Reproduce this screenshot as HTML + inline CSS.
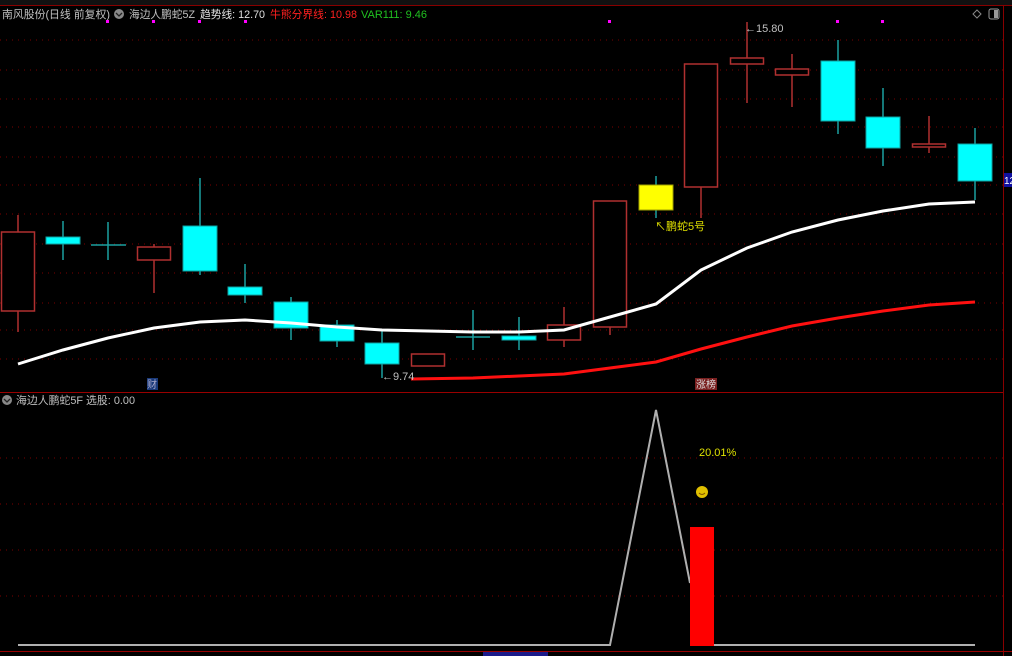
<!DOCTYPE html>
<html><head><meta charset="utf-8"><style>
html,body{margin:0;padding:0;background:#000;width:1012px;height:656px;overflow:hidden}
svg text{font-family:"Liberation Sans","Noto Sans CJK SC",sans-serif}
</style></head><body>
<svg width="1012" height="656" viewBox="0 0 1012 656" xmlns="http://www.w3.org/2000/svg">
<rect width="1012" height="656" fill="#000"/>
<rect x="0" y="0" width="1012" height="5" fill="#111"/>
<line x1="0" y1="5.5" x2="1012" y2="5.5" stroke="#800" stroke-width="1"/>
<g stroke="#7a0000" stroke-width="1" stroke-dasharray="1,5">
<line x1="0" y1="40" x2="1003" y2="40"/><line x1="0" y1="70" x2="1003" y2="70"/><line x1="0" y1="99" x2="1003" y2="99"/><line x1="0" y1="127" x2="1003" y2="127"/><line x1="0" y1="157" x2="1003" y2="157"/><line x1="0" y1="185" x2="1003" y2="185"/><line x1="0" y1="214" x2="1003" y2="214"/><line x1="0" y1="244" x2="1003" y2="244"/><line x1="0" y1="273" x2="1003" y2="273"/><line x1="0" y1="303" x2="1003" y2="303"/><line x1="0" y1="330" x2="1003" y2="330"/><line x1="0" y1="359" x2="1003" y2="359"/>
<line x1="0" y1="458" x2="1003" y2="458"/><line x1="0" y1="504" x2="1003" y2="504"/><line x1="0" y1="550" x2="1003" y2="550"/><line x1="0" y1="596" x2="1003" y2="596"/>
</g>
<line x1="1003.5" y1="5" x2="1003.5" y2="656" stroke="#800"/>
<line x1="0" y1="392.5" x2="1003" y2="392.5" stroke="#900"/>
<line x1="0" y1="651.5" x2="1012" y2="651.5" stroke="#900"/>
<g stroke-width="1.5">
<g stroke="#b03030">
<line x1="18" y1="215" x2="18" y2="332"/><line x1="154" y1="244" x2="154" y2="293"/><line x1="428" y1="354" x2="428" y2="366"/><line x1="564" y1="307" x2="564" y2="347"/><line x1="610" y1="201" x2="610" y2="335"/><line x1="701" y1="64" x2="701" y2="218"/><line x1="747" y1="22" x2="747" y2="103"/><line x1="792" y1="54" x2="792" y2="107"/><line x1="929" y1="116" x2="929" y2="153"/>
</g>
<g stroke="#1aa0a0">
<line x1="63" y1="221" x2="63" y2="260"/><line x1="108" y1="222" x2="108" y2="260"/><line x1="91" y1="245" x2="126" y2="245"/><line x1="200" y1="178" x2="200" y2="275"/><line x1="245" y1="264" x2="245" y2="303"/><line x1="291" y1="297" x2="291" y2="340"/><line x1="337" y1="320" x2="337" y2="347"/><line x1="382" y1="330" x2="382" y2="378"/><line x1="473" y1="310" x2="473" y2="350"/><line x1="456" y1="337" x2="490" y2="337"/><line x1="519" y1="317" x2="519" y2="350"/><line x1="656" y1="176" x2="656" y2="218"/><line x1="838" y1="40" x2="838" y2="134"/><line x1="883" y1="88" x2="883" y2="166"/><line x1="975" y1="128" x2="975" y2="200"/>
</g></g>
<g fill="#000" stroke="#b03030" stroke-width="1.5">
<rect x="1.5" y="232" width="33" height="79"/><rect x="137.5" y="247" width="33" height="13"/><rect x="411.5" y="354" width="33" height="12"/><rect x="547.5" y="325" width="33" height="15"/><rect x="593.5" y="201" width="33" height="126"/><rect x="684.5" y="64" width="33" height="123"/><rect x="730.5" y="58" width="33" height="6"/><rect x="775.5" y="69" width="33" height="6"/><rect x="912.5" y="144" width="33" height="3"/>
</g>
<g fill="#00ffff" stroke="#10a0a0" stroke-width="1">
<rect x="46" y="237" width="34" height="7"/><rect x="183" y="226" width="34" height="45"/><rect x="228" y="287" width="34" height="8"/><rect x="274" y="302" width="34" height="26"/><rect x="320" y="325" width="34" height="16"/><rect x="365" y="343" width="34" height="21"/><rect x="502" y="336" width="34" height="4"/><rect x="821" y="61" width="34" height="60"/><rect x="866" y="117" width="34" height="31"/><rect x="958" y="144" width="34" height="37"/>
</g>
<rect x="639" y="185" width="34" height="25" fill="#ffff00" stroke="#a0a000"/>
<polyline fill="none" stroke="#fff" stroke-width="3" points="18,364 63,350 108,338 154,328 200,322 245,320 291,323 337,327 382,330 428,331 473,332 519,332 564,330 610,317 656,304 701,270 747,248 792,232 838,220 883,211 929,204 975,202"/>
<polyline fill="none" stroke="#ff1010" stroke-width="3" points="411,379 473,378 519,376 564,374 610,368 656,362 701,349 747,337 792,326 838,318 883,311 929,305 975,302"/>
<text x="2" y="18" font-size="11" fill="#c0c0c0" textLength="108" lengthAdjust="spacingAndGlyphs">南风股份(日线 前复权)</text>
<circle cx="119" cy="14" r="5" fill="#888"/><path d="M116 13 L119 16 L122 13" stroke="#222" fill="none" stroke-width="1.3"/>
<text x="129" y="18" font-size="11" fill="#c0c0c0" textLength="66" lengthAdjust="spacingAndGlyphs">海边人鹏蛇5Z</text>
<text x="200" y="18" font-size="11" fill="#e0e0e0" textLength="65" lengthAdjust="spacingAndGlyphs">趋势线: 12.70</text>
<text x="270" y="18" font-size="11" fill="#ff2020" textLength="87" lengthAdjust="spacingAndGlyphs">牛熊分界线: 10.98</text>
<text x="361" y="18" font-size="11" fill="#20c020" textLength="66" lengthAdjust="spacingAndGlyphs">VAR111: 9.46</text>
<g fill="#ff00ff"><rect x="106" y="20" width="3" height="3"/><rect x="152" y="20" width="3" height="3"/><rect x="198" y="20" width="3" height="3"/><rect x="244" y="20" width="3" height="3"/><rect x="608" y="20" width="3" height="3"/><rect x="836" y="20" width="3" height="3"/><rect x="881" y="20" width="3" height="3"/></g>
<path d="M977 10 L981 14 L977 18 L973 14 Z" fill="none" stroke="#888"/>
<rect x="989" y="9" width="10" height="10" rx="2" fill="none" stroke="#999"/><rect x="994" y="10" width="4" height="8" fill="#999"/>
<text x="745" y="32" font-size="11" fill="#c0c0c0">←15.80</text>
<text x="382" y="380" font-size="11" fill="#c0c0c0">←9.74</text>
<text x="655" y="230" font-size="11" fill="#e0e000">↖鹏蛇5号</text>
<rect x="147" y="378" width="11" height="12" fill="#1a3a7a"/><text x="147" y="388" font-size="10" fill="#aac">财</text>
<rect x="695" y="378" width="22" height="12" fill="#7a2020"/><text x="696" y="388" font-size="10" fill="#ddd">涨榜</text>
<rect x="1004" y="173" width="8" height="14" fill="#1010a0"/><text x="1004" y="184" font-size="10" fill="#fff">12</text>
<circle cx="7" cy="400" r="5" fill="#888"/><path d="M4 399 L7 402 L10 399" stroke="#222" fill="none" stroke-width="1.3"/>
<text x="16" y="404" font-size="11" fill="#c0c0c0" textLength="119" lengthAdjust="spacingAndGlyphs">海边人鹏蛇5F  选股: 0.00</text>
<polyline fill="none" stroke="#b0b0b0" stroke-width="2" points="18,645 610,645 656,410 690,583"/>
<line x1="714" y1="645" x2="975" y2="645" stroke="#b0b0b0" stroke-width="2"/>
<rect x="690" y="527" width="24" height="119" fill="#ff0000"/>
<text x="699" y="456" font-size="11" fill="#e0e000">20.01%</text>
<circle cx="702" cy="492" r="6" fill="#e0c000"/><path d="M699 493 Q702 496 705 493" stroke="#805000" fill="none"/>
<rect x="483" y="652" width="65" height="4" fill="#1a1a8a"/>
</svg>
</body></html>
